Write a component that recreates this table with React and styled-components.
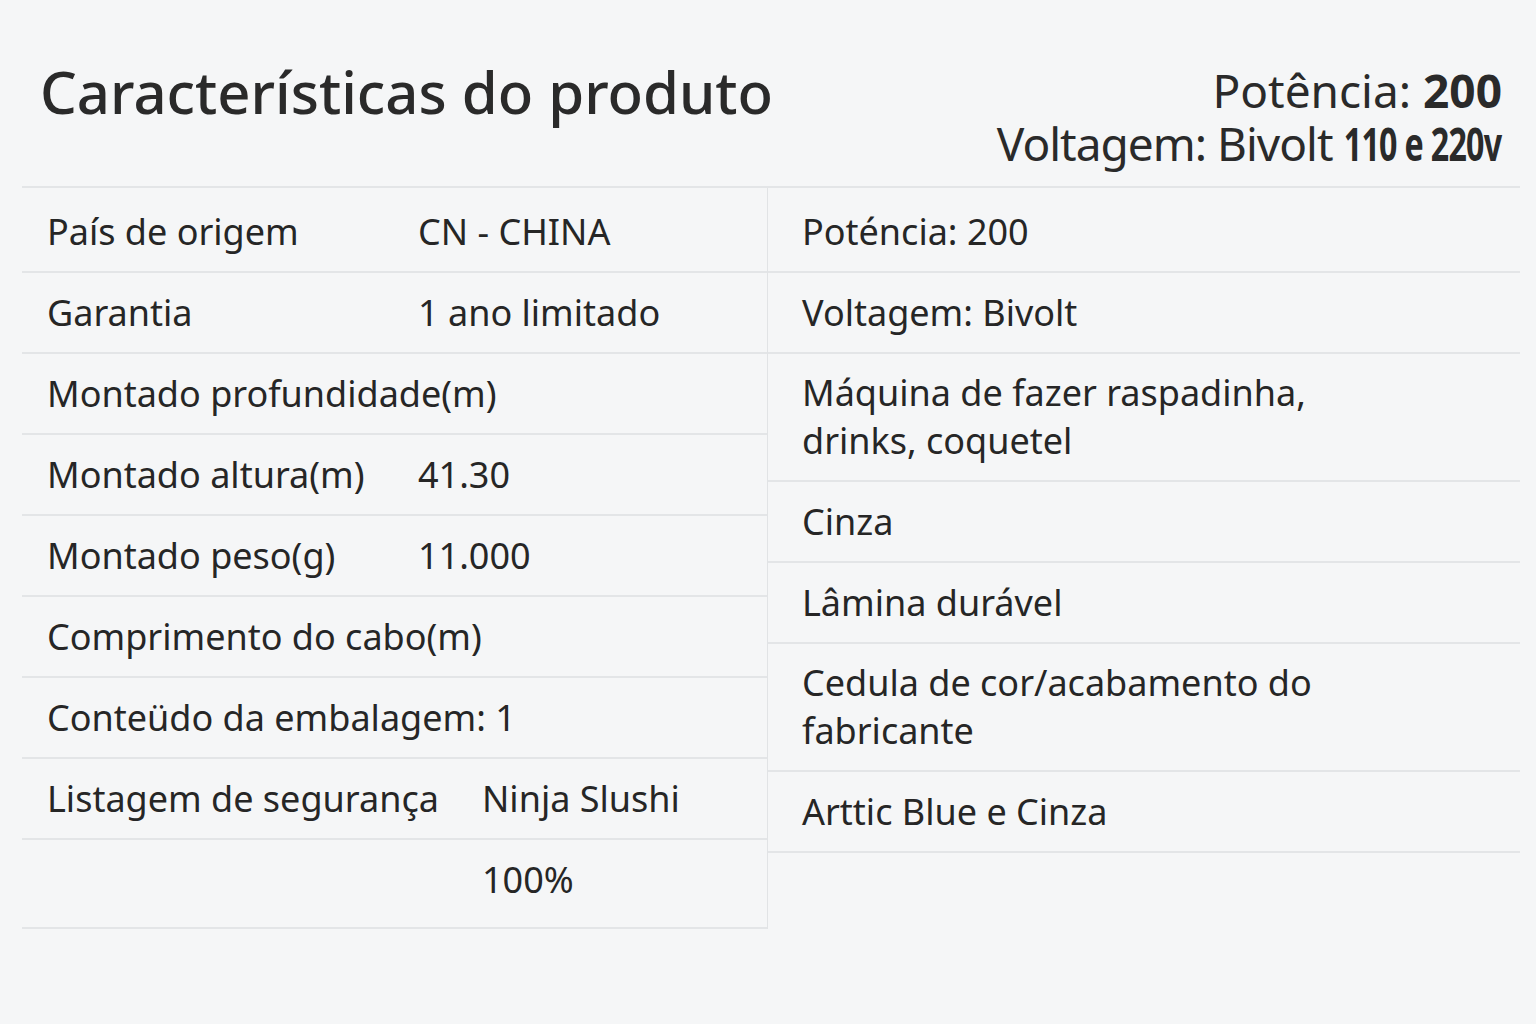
import React from "react";
import styled, { createGlobalStyle } from "styled-components";

const GlobalStyle = createGlobalStyle`
  html, body {
    margin: 0;
    padding: 0;
    background: #f5f6f7;
  }
  body {
    font-family: "Noto Sans", "Open Sans", sans-serif;
    color: #262626;
  }
`;

const leftRows = [
  { label: "País de origem", value: "CN - CHINA" },
  { label: "Garantia", value: "1 ano limitado" },
  { label: "Montado profundidade(m)" },
  { label: "Montado altura(m)", value: "41.30" },
  { label: "Montado peso(g)", value: "11.000" },
  { label: "Comprimento do cabo(m)" },
  { label: "Conteüdo da embalagem: 1" },
  { label: "Listagem de segurança", value: "Ninja Slushi", wide: true },
  { label: "", value: "100%", wide: true, last: true },
];

const rightRows = [
  ["Poténcia: 200"],
  ["Voltagem: Bivolt"],
  ["Máquina de fazer raspadinha,", "drinks, coquetel"],
  ["Cinza"],
  ["Lâmina durável"],
  ["Cedula de cor/acabamento do", "fabricante"],
  ["Arttic Blue e Cinza"],
];

function App() {
  return (
    <Page>
      <GlobalStyle />
      <Header>
        <Title>Características do produto</Title>
        <Summary>
          <SummaryLine>
            Potência: <Strong>200</Strong>
          </SummaryLine>
          <SummaryLine narrow>
            Voltagem: Bivolt <Condensed>110 e 220v</Condensed>
          </SummaryLine>
        </Summary>
      </Header>
      <Table>
        <Column divider>
          {leftRows.map((row, i) => (
            <Row key={i} first={i === 0} last={row.last}>
              <Pair wide={row.wide}>
                <span>{row.label}</span>
                {row.value && <span>{row.value}</span>}
              </Pair>
            </Row>
          ))}
        </Column>
        <Column>
          {rightRows.map((lines, i) => (
            <Row key={i} first={i === 0} multi={lines.length > 1}>
              <Text>
                {lines.map((l, j) => (
                  <div key={j}>{l}</div>
                ))}
              </Text>
            </Row>
          ))}
        </Column>
      </Table>
    </Page>
  );
}

export default App;

const Page = styled.main`
  width: 1536px;
  height: 1024px;
  overflow: hidden;
  background: #f5f6f7;
`;

const Header = styled.header`
  display: flex;
  justify-content: space-between;
  align-items: flex-start;
  padding: 54px 34px 0 40px;
  height: 186px;
  box-sizing: border-box;
`;

const Title = styled.h1`
  margin: 0;
  font-size: 58px;
  font-weight: 500;
  line-height: 76px;
  color: #2a2a2a;
`;

const Summary = styled.div`
  text-align: right;
  padding-top: 10px;
`;

const SummaryLine = styled.div`
  font-size: 46px;
  line-height: 53px;
  color: #2a2a2a;
  white-space: nowrap;
  letter-spacing: ${(p) => (p.narrow ? "-1px" : "0")};
`;

const Strong = styled.b`
  font-weight: 700;
`;

// narrow bold figures, squeezed toward the right edge
const Condensed = styled.b`
  display: inline-block;
  font-weight: 700;
  letter-spacing: -1px;
  transform: scaleX(0.7);
  transform-origin: right center;
  margin-left: -67px;
`;

const Table = styled.section`
  display: grid;
  grid-template-columns: 746px 752px;
  margin: 0 16px 0 22px;
  border-top: 2px solid #e3e5e7;
  align-items: start;
`;

const Column = styled.div`
  border-right: ${(p) => (p.divider ? "1px solid #e1e3e5" : "none")};
`;

const Row = styled.div`
  padding: ${(p) => (p.first ? "20px" : "16px")} 25px
    ${(p) => (p.last ? "23px" : "15px")};
  padding-top: ${(p) => (p.multi ? "15px" : undefined)};
  border-bottom: 2px solid #e3e5e7;
  font-size: 36px;
  line-height: 48px;
  color: #262626;
`;

const Pair = styled.div`
  display: grid;
  grid-template-columns: ${(p) => (p.wide ? "435px" : "371px")} 1fr;
  white-space: nowrap;
`;

const Text = styled.div`
  padding-left: 9px;
`;
